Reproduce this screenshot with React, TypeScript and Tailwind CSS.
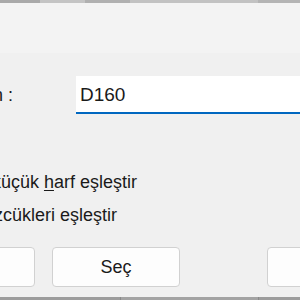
import React from "react";

const font = { fontFamily: '"Segoe UI", "Liberation Sans", Arial, sans-serif' };

function EndText({ end, children, className = "" }: { end: number; children: React.ReactNode; className?: string }) {
  return (
    <div className={`flex justify-end whitespace-nowrap ${className}`} style={{ width: end }}>
      <span className="shrink-0">{children}</span>
    </div>
  );
}

export default function App() {
  return (
    <div className="w-[300px] h-[300px] overflow-hidden bg-[#f0f0f0] flex flex-col text-[#1a1a1a]" style={font}>
      {/* background window fragment */}
      <div className="h-[3px] flex shrink-0">
        <div className="w-[40px] bg-[#a9a9a9]" />
        <div className="w-[45px] bg-[#c4c4c4]" />
        <div className="w-[45px] bg-[#b0b0b0]" />
        <div className="w-[128px] bg-[#c2c2c2]" />
        <div className="flex-1 bg-[#b4b4b4]" />
      </div>
      {/* title area */}
      <div className="h-[50px] bg-[#f3f3f3] shrink-0" />
      {/* find row */}
      <div className="flex items-center mt-[23px] h-[38px] shrink-0">
        <EndText end={13} className="text-[18px] leading-none">Aranan :</EndText>
        <div className="ml-[63px] w-[240px] h-[38px] bg-white border-b-2 border-[#0067c0] flex items-center pl-[4px] text-[19px] leading-none shrink-0">
          D160
        </div>
      </div>
      {/* checkboxes */}
      <div className="mt-[58px] flex flex-col gap-[13px] text-[18px] leading-[20px] shrink-0">
        <EndText end={137}>
          Büyük/küçük <span className="underline underline-offset-2">h</span>arf eşleştir
        </EndText>
        <EndText end={117}>Tam sözcükleri eşleştir</EndText>
      </div>
      {/* buttons */}
      <div className="mt-[22px] flex gap-[17px] h-[40px] shrink-0 text-[18px]">
        <div className="w-[128px] -ml-[93px] shrink-0 rounded-[4px] border border-[#d1d1d1] bg-[#fdfdfd]" />
        <div className="w-[128px] shrink-0 rounded-[4px] border border-[#d1d1d1] bg-[#fdfdfd] flex items-center justify-center">
          Seç
        </div>
        <div className="w-[128px] ml-[70px] shrink-0 rounded-[4px] border border-[#d1d1d1] bg-[#fdfdfd]" />
      </div>
      <div className="flex-1" />
      {/* bottom fragment */}
      <div className="h-[3px] flex shrink-0">
        <div className="w-[120px] bg-[#9c9c9c]" />
        <div className="w-[138px] bg-[#a3a3a3] border-l border-[#8a8a8a]" />
        <div className="flex-1 bg-[#9c9c9c] border-l border-[#8a8a8a]" />
      </div>
    </div>
  );
}
